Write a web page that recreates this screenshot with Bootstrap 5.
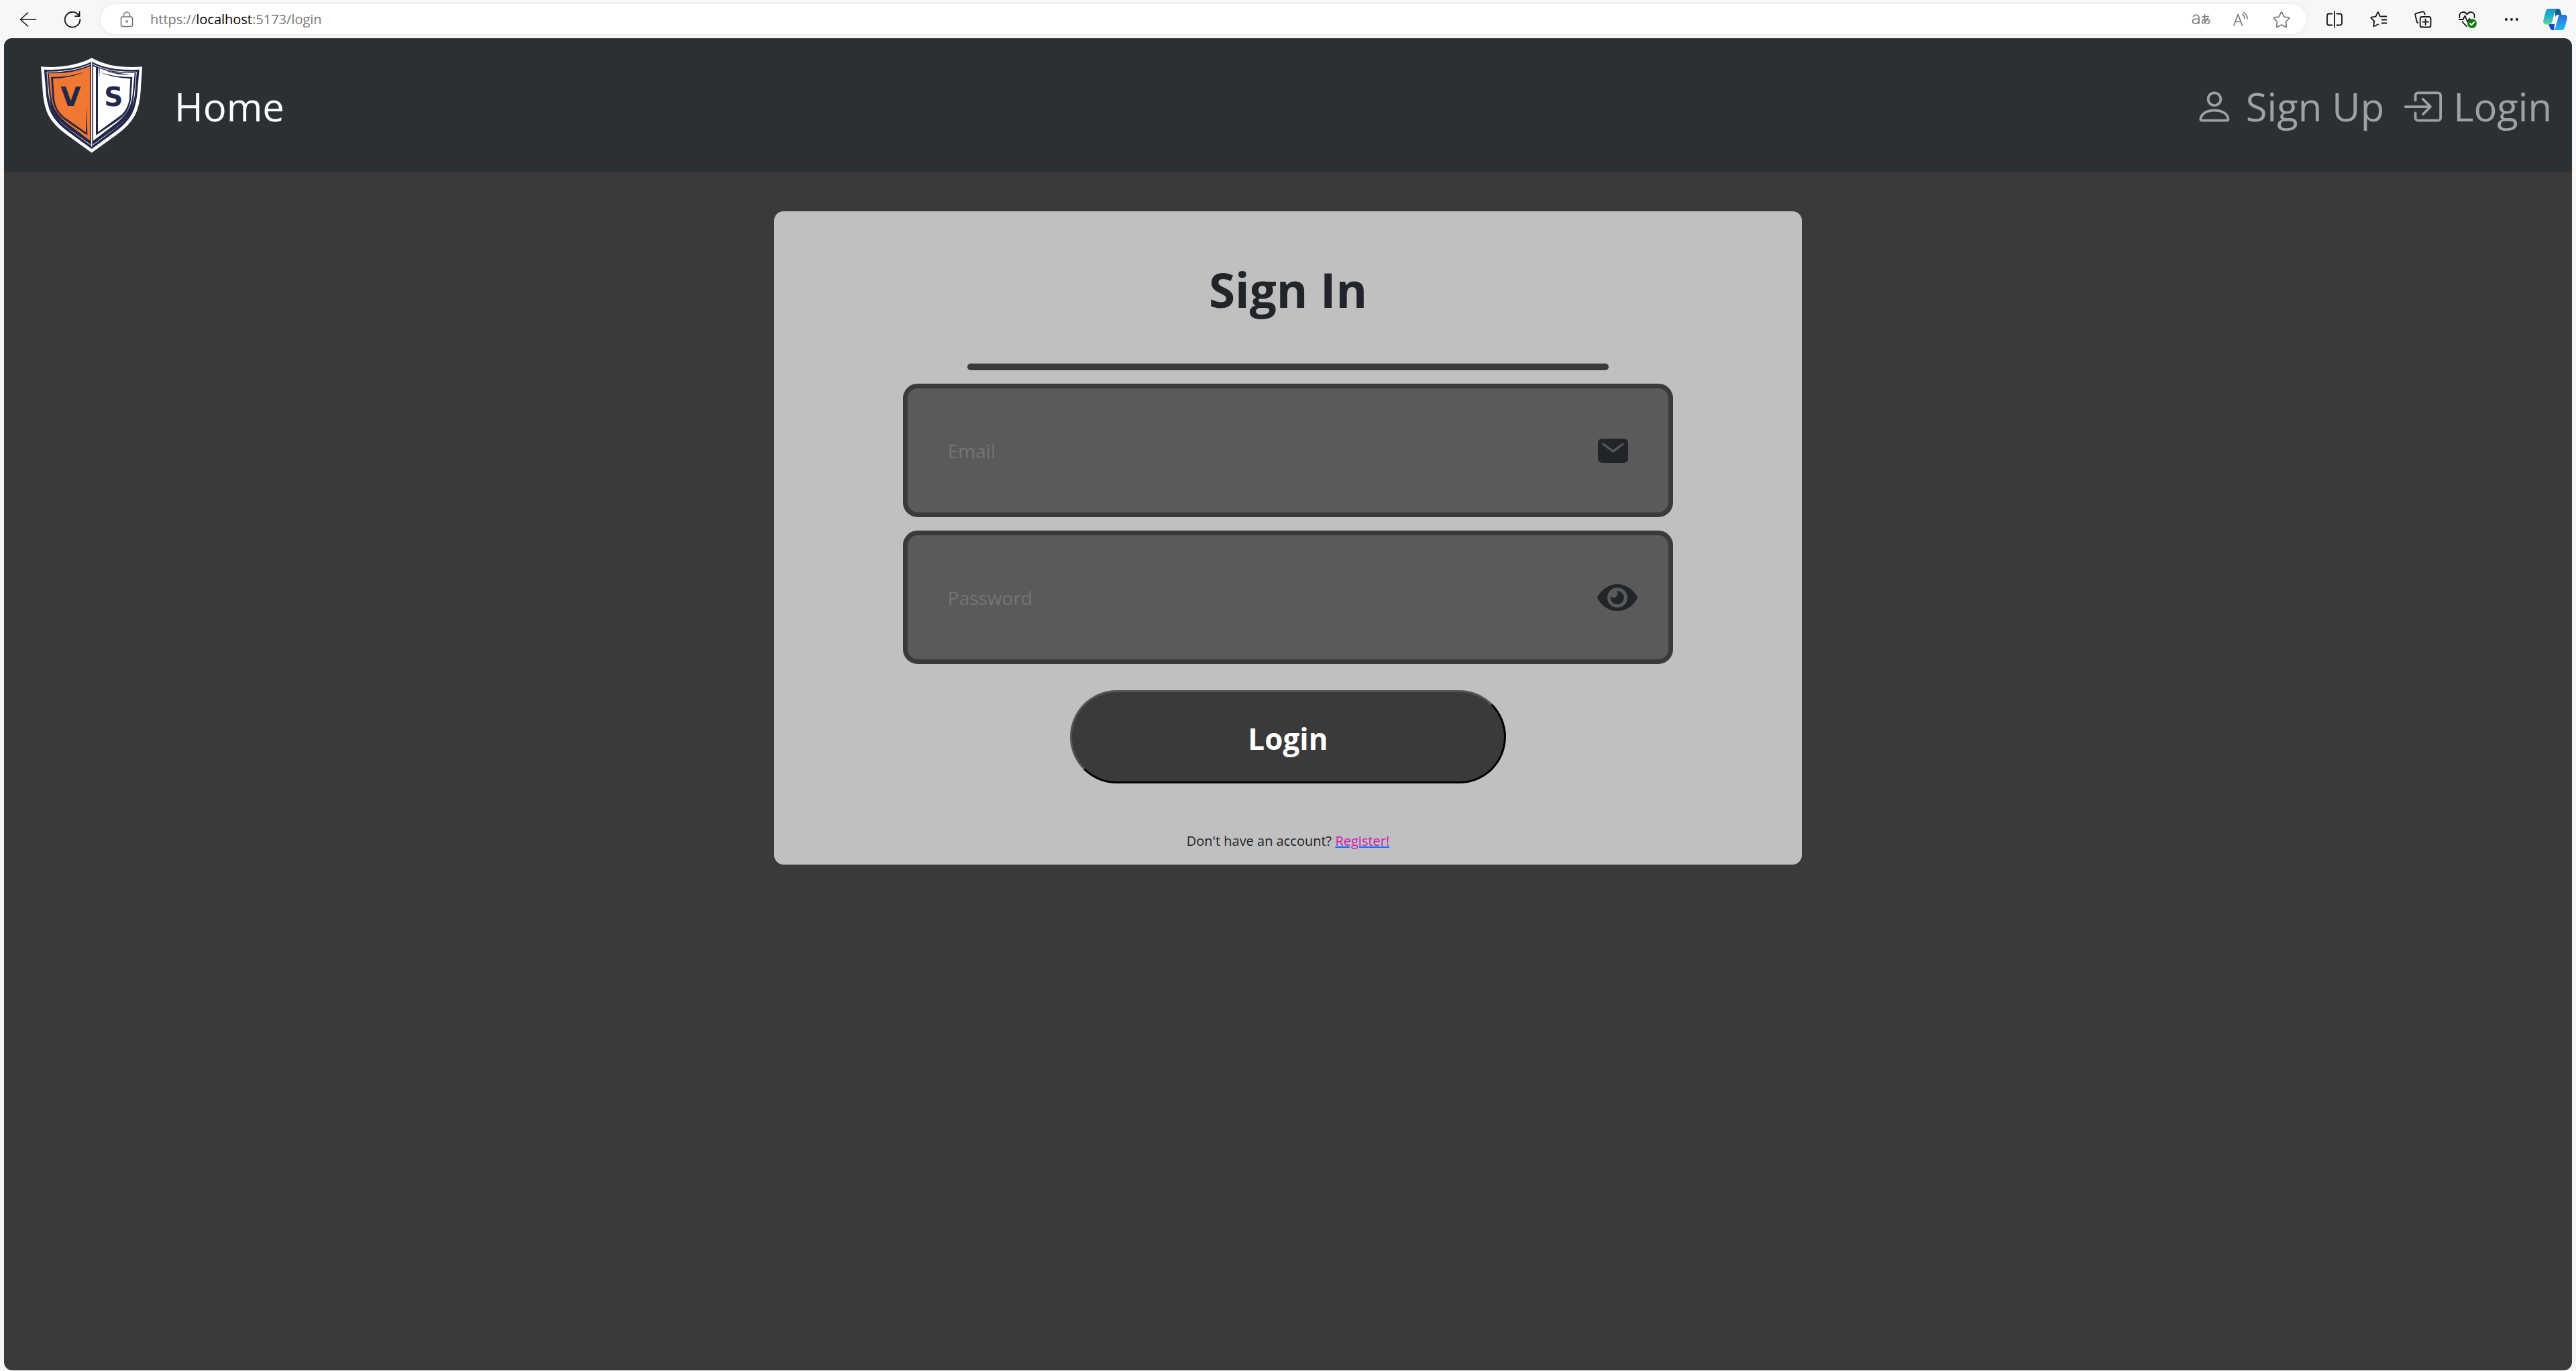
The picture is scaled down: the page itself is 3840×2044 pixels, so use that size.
<!DOCTYPE html>
<html lang="en">
<head>
<meta charset="utf-8">
<meta name="viewport" content="width=device-width, initial-scale=1">
<title>Sign In</title>
<link href="https://cdn.jsdelivr.net/npm/bootstrap@5.3.0/dist/css/bootstrap.min.css" rel="stylesheet">
<style>
  body { background: #f7f7f7; font-family: "Open Sans", "Noto Sans", sans-serif; }
  .browser-bar { height: 57px; padding: 0 0 0 9px; }
  .tool-btn { width: 66px; height: 45px; padding: 0; border: 0; background: none; color: #111; display: flex; align-items: center; justify-content: center; }
  .tool-btn:last-child { width: 63px; }
  .address-pill { height: 45px; margin: 0 9px; padding: 0 7px 0 9px; background: #fff; box-shadow: 0 0 6px rgba(0,0,0,.08); color: #767676; }
  .address-pill .tool-btn { width: 60px; color: #767676; }
  .address-text { font-size: 20px; line-height: 30px; margin-left: 5px; }
  .address-text span { color: #000; }
  .site-frame { margin: 0 6px 1px; background: #3a3a3a; border-radius: 12px; overflow: hidden; }
  .site-nav { background: #2b3035; height: 199px; padding: 0 30px 0 54px; font-size: 58px; }
  .site-nav .nav-link { padding: 4px 0 0; line-height: 90px; color: rgba(255,255,255,.55); white-space: nowrap; }
  .site-nav .nav-link.active { color: #fff; margin-left: 47px; }
  .site-nav .nav-link svg { width: 60px; height: 60px; margin-right: 17px; }
  .account-links { gap: 26px; }
  .login-card { width: 40%; margin: 59px auto 0; padding: 75px 0 20px; background: #c0c0c0; border-radius: 14px; color: #212529; }
  .login-card h1 { font-size: 71px; line-height: 84px; font-weight: 700; margin: 0 0 68px; }
  .title-rule { width: 62.5%; height: 10px; margin: 0 auto 20px; border: 0; border-radius: 5px; background: #3a3a3a; opacity: 1; }
  .field-box { width: 75%; height: 199px; margin-bottom: 20px; padding: 0 46px 0 60px; border: 7px solid #3a3a3a; border-radius: 22px; background: #5a5a5a; }
  .field-box input { flex: 1; min-width: 0; height: 60px; padding: 0; border: 0; background: none; font-size: 28px; line-height: 42px; color: #fff; outline: 0; }
  .field-box input::placeholder { color: #757575; opacity: 1; }
  .field-icon { width: 60px; height: 60px; padding: 0; border: 0; background: none; color: #212529; display: block; }
  .login-btn { width: 42.5%; height: 139px; margin-top: 19px; padding: 4px 0 0; border: 3px outset #000; border-radius: 70px; background: #3a3a3a; color: #fff; font-size: 44px; font-weight: 700; }
  .register-line { margin: 71px 0 0; font-size: 20px; line-height: 30px; }
  .register-line a { color: #d01ab4; text-decoration-color: #0d6efd; text-decoration-thickness: 2px; }
</style>
</head>
<body class="d-flex flex-column min-vh-100">

<header class="browser-bar d-flex align-items-center">
  <button class="tool-btn" aria-label="Back"><svg width="28" height="28" viewBox="0 0 28 28" fill="none" stroke="currentColor" stroke-width="1.6" stroke-linecap="round" stroke-linejoin="round"><path d="M25.500 14H2.500M13.500 4L2.500 14l11 10"/></svg></button>
  <button class="tool-btn" aria-label="Refresh"><svg width="28" height="28" viewBox="0 0 28 28" fill="none" stroke="currentColor" stroke-width="1.800" stroke-linecap="round" stroke-linejoin="round"><path d="M25.300 14A11.300 11.300 0 1 1 22.500 6.800L24 8.800M24.500 2.500v6.700h-6.500"/></svg></button>
  <div class="address-pill flex-grow-1 d-flex align-items-center rounded-pill">
    <button class="tool-btn" aria-label="Site information"><svg width="24" height="28" viewBox="0 0 24 28" fill="none" stroke="currentColor" stroke-width="1.600"><rect x="3.500" y="10" width="17" height="14.500" rx="2.500"/><path d="M7.500 10V7.500a4.500 4.500 0 0 1 9 0V10"/><circle cx="12" cy="17" r="1" fill="currentColor"/></svg></button>
    <div class="address-text flex-grow-1">https://<span>localhost</span>:5173/login</div>
    <button class="tool-btn" aria-label="Translate"><svg width="30" height="28" viewBox="0 0 30 28" fill="none" stroke="currentColor" stroke-width="1.600" stroke-linecap="round" stroke-linejoin="round"><path d="M3.500 9.500C6 6 12 6.300 12 11.500V20M12 13c-4 0-9.500.2-9.500 3.800 0 4.200 7 4.300 9.500.2"/><path d="M16.500 10q5 .3 9.500-.7M20.500 6.500q-1 7 .8 13M25 12c-1 4-4 7.500-6.500 7.500-3.500 0-2-6 4.500-6 6 0 5.500 6.200.8 7"/></svg></button>
    <button class="tool-btn" aria-label="Read aloud"><svg width="28" height="28" viewBox="0 0 28 28" fill="none" stroke="currentColor" stroke-width="1.700" stroke-linecap="round" stroke-linejoin="round"><path d="M3 23L9.200 6.500 15.500 23M5.300 17.500h8M16 6.500c2 1.500 3 3.500 3.300 6M17 3.500c3.500 1.500 6 5.500 6 9.500"/></svg></button>
    <button class="tool-btn" aria-label="Add to favorites"><svg width="28" height="28" viewBox="0 0 28 28" fill="none" stroke="currentColor" stroke-width="1.700" stroke-linejoin="round"><path d="M13 4.200q1-2 2 0l2.900 6 6.500.9q2 .4.700 1.800l-4.700 4.600 1.100 6.400q.2 2-1.700 1.200L14 22l-5.800 3.100q-1.900.8-1.700-1.200l1.100-6.400-4.700-4.600q-1.300-1.400.7-1.800l6.500-.9z"/></svg></button>
  </div>
  <button class="tool-btn" aria-label="Split screen"><svg width="28" height="28" viewBox="0 0 28 28" fill="none" stroke="currentColor" stroke-width="1.800" stroke-linecap="round"><path d="M14 2.500v23M10.500 5.500H6A3 3 0 0 0 3 8.500v11a3 3 0 0 0 3 3h4.500M17.500 5.500H22a3 3 0 0 1 3 3v11a3 3 0 0 1-3 3h-4.500"/></svg></button>
  <button class="tool-btn" aria-label="Favorites"><svg width="28" height="28" viewBox="0 0 28 28" fill="none" stroke="currentColor" stroke-width="1.800" stroke-linecap="round" stroke-linejoin="round"><path d="M17 9.500h-1L13.500 3.800q-.6-1.300-1.300 0L9.500 9.700l-6.200.9q-1.600.3-.5 1.500l4.500 4.400-1 6.500q-.2 1.700 1.200 1l5.500-2.800M18.500 9.500h6.800M18.500 14.500h6.800M18.500 19.500h6.800"/></svg></button>
  <button class="tool-btn" aria-label="Collections"><svg width="28" height="28" viewBox="0 0 28 28" fill="none" stroke="currentColor" stroke-width="1.800" stroke-linecap="round"><rect x="9.700" y="10" width="15.800" height="15.500" rx="3"/><path d="M17.600 13.500v8.500M13.400 17.700h8.500M6.500 19.200q-1.400-.5-1.700-2L2.400 7.700q-.4-2.200 1.700-2.800l9-2.400q2.200-.5 3 1.700l.6 2.300"/></svg></button>
  <button class="tool-btn" aria-label="Browser essentials"><svg width="30" height="30" viewBox="0 0 30 30" fill="none" stroke="currentColor" stroke-width="1.800" stroke-linecap="round" stroke-linejoin="round"><path d="M3.500 12C2 4.500 10 1 14.500 7.500 19 1 27 4.500 25.500 12M2.800 15h5.700l3-5.500 3.800 9 2.700-4.500 1.200 1M7.500 18.500l6.500 6.800"/><circle cx="22" cy="21" r="7" fill="#107c10" stroke="none"/><path d="M19 21.300l2 2 4.200-4.300" stroke="#fff" stroke-width="2"/></svg></button>
  <button class="tool-btn" aria-label="Settings and more"><svg width="28" height="28" viewBox="0 0 28 28" fill="currentColor"><circle cx="6" cy="14" r="1.900"/><circle cx="14" cy="14" r="1.900"/><circle cx="22" cy="14" r="1.900"/></svg></button>
  <button class="tool-btn" aria-label="Copilot"><svg width="38" height="34" viewBox="0 0 38 34">
    <defs>
      <linearGradient id="cpA" x1="0" y1="0" x2="0" y2="1"><stop offset="0" stop-color="#1b96d8"/><stop offset=".5" stop-color="#22b3c8"/><stop offset="1" stop-color="#5edb8b"/></linearGradient>
      <linearGradient id="cpB" x1="0" y1="0" x2="0" y2="1"><stop offset="0" stop-color="#2a6cd6"/><stop offset="1" stop-color="#22b8f8"/></linearGradient>
      <linearGradient id="cpC" x1="0" y1="0" x2="1" y2="1"><stop offset="0" stop-color="#1745b8"/><stop offset="1" stop-color="#1742e0"/></linearGradient>
    </defs>
    <path d="M18 1h5q3 0 4 3l1.500 6h-5q-3 0-4 3z" fill="#12608c"/>
    <path d="M9 24h9l-1 9h-1.500q-3 0-4-3z" fill="url(#cpC)"/>
    <path d="M9 1h13q-2.500 1-3.400 4l-4.400 16q-1 3.500-4.700 3.500H6Q0 24.500 1.500 17.500L4.500 6Q6 1 9 1z" fill="url(#cpA)"/>
    <path d="M25 10h7q6 0 4.500 7l-3 11q-1.500 5-4.500 5H16q2.500-1 3.400-4l4.400-16q.5-2 1.200-3z" fill="url(#cpB)"/>
  </svg></button>
</header>

<div class="site-frame flex-grow-1">
  <nav class="site-nav d-flex align-items-center">
    <a href="#" aria-label="Home page"><svg class="d-block" width="153" height="142" viewBox="60 46 459 426">
      <path d="M290 47Q318 64 370 78 440 92 516 86L510 180Q506 262 482 306 458 350 400 392L290 471 180 392Q122 350 98 306 74 262 70 180L63 86Q140 92 210 76 262 64 290 47z" fill="#fff"/>
      <path d="M290 64Q340 90 400 97 450 102 503 99L496 180Q492 256 470 297 448 339 393 379L290 454 187 379Q132 339 110 297 88 256 84 180L77 99Q130 102 180 95 240 88 290 64z" fill="#242848"/>
      <path d="M290 73Q340 99 400 106 445 111 490 110L484 180Q480 252 460 290 438 331 386 369L290 440 194 369Q142 331 120 290 100 252 96 180L90 110Q135 111 180 104 240 97 290 73z" fill="none" stroke="#fff" stroke-width="3"/>
      <path d="M284 84Q200 120 98 115L105 190Q109 250 128 280 150 320 202 356L284 418z" fill="#f07832"/>
      <path d="M296 84Q380 118 482 115L475 190Q471 250 452 280 430 320 378 356L296 418z" fill="#fff"/>
      <path d="M108 132Q190 134 258 110 200 138 117 140L124 235Q130 280 165 310L264 380 268 265 271 393Q205 350 170 325 126 292 115 235z" fill="#242848"/>
      <path d="M472 132Q390 134 324 110 385 138 463 140L458 235Q450 275 425 300L318 378V88H309V393Q375 350 410 325 456 292 465 235zM321 92l3 45 2-40z" fill="#242848"/>
      <path d="M104 195Q106 250 127 285 151 324 202 360L284 420V432L190 366Q135 324 113 285 100 250 104 195zM476 195Q474 250 453 285 429 324 378 360L296 420V432L390 366Q445 324 467 285 480 250 476 195zM340 98Q400 118 463 120 400 128 340 98z" fill="#242848"/>
      <path d="M290 68V440" stroke="#242848" stroke-width="11"/><path d="M290 66V444" stroke="#fff" stroke-width="4"/>
      <text x="196" y="262" text-anchor="middle" font-family="DejaVu Sans" font-weight="700" font-size="117" fill="#242848">V</text>
      <text x="388" y="262" text-anchor="middle" font-family="DejaVu Sans" font-weight="700" font-size="117" fill="#242848">S</text>
    </svg></a>
    <a class="nav-link active" href="#">Home</a>
    <div class="account-links d-flex ms-auto">
      <a class="nav-link d-flex align-items-center" href="#"><svg viewBox="0 0 16 16" fill="currentColor"><path d="M8 8a3 3 0 1 0 0-6 3 3 0 0 0 0 6m2-3a2 2 0 1 1-4 0 2 2 0 0 1 4 0m4 8c0 1-1 1-1 1H3s-1 0-1-1 1-4 6-4 6 3 6 4m-1-.004c-.001-.246-.154-.986-.832-1.664C11.516 10.680 10.289 10 8 10s-3.516.680-4.168 1.332c-.678.678-.830 1.418-.832 1.664z"/></svg>Sign Up</a>
      <a class="nav-link d-flex align-items-center" href="#"><svg viewBox="0 0 16 16" fill="currentColor"><path d="M6 3.500a.5.5 0 0 1 .5-.5h8a.5.5 0 0 1 .5.5v9a.5.5 0 0 1-.5.5h-8a.5.5 0 0 1-.5-.5v-2a.5.5 0 0 0-1 0v2A1.500 1.500 0 0 0 6.500 14h8a1.500 1.500 0 0 0 1.500-1.500v-9A1.500 1.500 0 0 0 14.500 2h-8A1.500 1.500 0 0 0 5 3.500v2a.5.5 0 0 0 1 0z"/><path d="M11.854 8.354a.5.5 0 0 0 0-.708l-3-3a.5.5 0 1 0-.708.708L10.293 7.500H1.500a.5.5 0 0 0 0 1h8.793l-2.147 2.146a.5.5 0 0 0 .708.708z"/></svg>Login</a>
    </div>
  </nav>

  <main>
    <form class="login-card d-flex flex-column align-items-center" onsubmit="return false">
      <h1>Sign In</h1>
      <hr class="title-rule">
      <div class="field-box d-flex align-items-center">
        <label class="visually-hidden" for="email">Email</label>
        <input id="email" type="email" placeholder="Email">
        <svg class="field-icon" viewBox="0 0 60 60"><rect x="1" y="12" width="45" height="36" rx="6" fill="currentColor"/><path d="M9 20l14.500 11L38 20" fill="none" stroke="#5a5a5a" stroke-width="3" stroke-linecap="round"/></svg>
      </div>
      <div class="field-box d-flex align-items-center">
        <label class="visually-hidden" for="password">Password</label>
        <input id="password" type="password" placeholder="Password">
        <button class="field-icon" type="button" aria-label="Show password"><svg class="d-block" width="60" height="60" viewBox="0 0 60 60"><path d="M.5 28.500C7 17 18 10 30 10s23 7 29.500 18.500q.8 1.500 0 3C53 43 42 50 30 50S7 43 .5 31.500q-.8-1.500 0-3z" fill="currentColor"/><circle cx="30" cy="30" r="15" fill="#5a5a5a"/><path d="M29 20a10 10 0 1 1-9 8 5 5 0 0 0 9-8z" fill="currentColor"/></svg></button>
      </div>
      <button class="login-btn" type="submit">Login</button>
      <p class="register-line">Don't have an account? <a href="#">Register!</a></p>
    </form>
  </main>
</div>

<script src="https://cdn.jsdelivr.net/npm/bootstrap@5.3.0/dist/js/bootstrap.bundle.min.js"></script>
</body>
</html>
